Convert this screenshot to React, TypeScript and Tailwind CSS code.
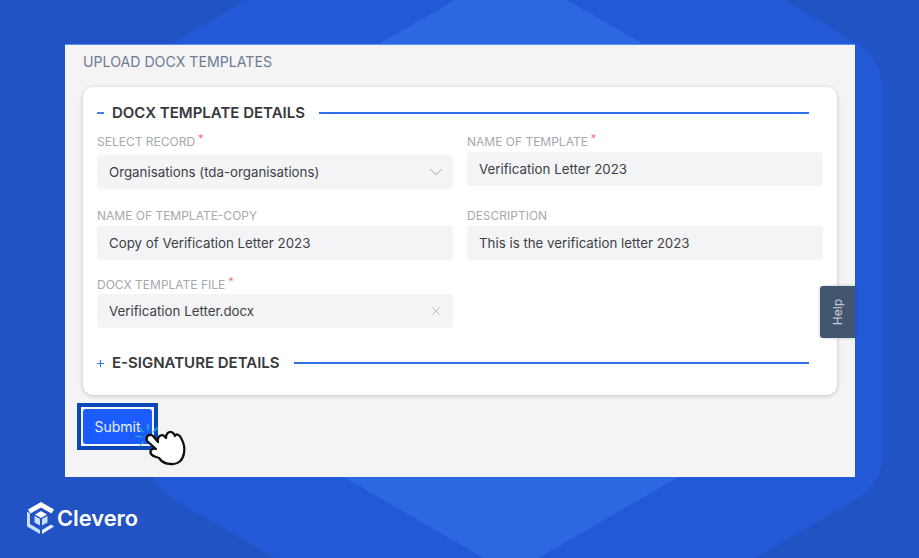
import { ChevronDown, Plus, X } from 'lucide-react'
import type { ReactNode } from 'react'

const font = { fontFamily: 'Inter, "Liberation Sans", sans-serif' }
const inputBox = 'flex h-[34px] w-full items-center justify-between rounded-[4px] bg-[#f3f4f6] pl-[12px] pr-[11px] pt-[2px] text-[13.3px] text-[#3f4045]'
const labelText = 'flex h-[16px] items-center text-[12px] leading-[16px] text-[#a5a8b0]'

function Label({ text, required }: { text: string; required?: boolean }) {
  return (
    <div className={labelText}>
      <span>{text}</span>
      {required && <span className="mb-[9px] ml-[3px] text-[11px] leading-[8px] text-[#f4736b]">*</span>}
    </div>
  )
}

function Field({ children, className }: { children: ReactNode; className?: string }) {
  return <div className={`${inputBox} ${className ?? ''}`}>{children}</div>
}

function SectionHeading({ title, open }: { title: string; open?: boolean }) {
  return (
    <div className="flex h-[20px] items-center">
      <div className="flex w-[15px] shrink-0 items-center text-[#2f74f0]">
        {open ? <div className="h-[2px] w-[7px] bg-[#3f80f2]" /> : <Plus size={11} strokeWidth={2.2} className="-ml-[2px]" />}
      </div>
      <span className="pt-px text-[15px] font-semibold whitespace-nowrap text-[#37383c]">{title}</span>
      <div className="mr-[14px] ml-[14px] h-[2px] flex-1 bg-[#2f6fe8]" />
    </div>
  )
}

function Background() {
  return (
    <svg className="absolute inset-0" width="919" height="558" viewBox="0 0 919 558">
      <path
        d="M515 -160 L853 41 Q882 58 882 90 L882 455 Q882 484 855 500 L515 697 L175 500 Q148 484 148 455 L148 90 Q148 58 177 41 Z"
        fill="#2259d7"
      />
      <path d="M511 -32 L811 140 L811 400 L511 574 L211 400 L211 140 Z" fill="#2c69e1" />
    </svg>
  )
}

function Hand() {
  return (
    <svg className="absolute top-[418px] left-[131px]" width="58" height="52" viewBox="132 418 58 52" fill="none">
      <g stroke="#2fc4a6" strokeWidth="1.2" strokeLinecap="round">
        <path d="M141 428 L144 432" />
        <path d="M149 424 L149 430" />
        <path d="M158 428 L154 432" />
        <path d="M137 436 L143 437" />
        <path d="M141 446 L144 442" />
      </g>
      <path
        d="M148 441 C146 436 151 433 154 436 L159 442 C158 436 163 433 166 437 L167 438 C167 432 172 430 175 434 L176 436 C177 433 181 435 182 438 C185 443 186 448 185 453 C184 460 179 465 172 464 C166 464 162 461 160 458 C158 457 154 457 152 454 C150 450 154 448 157 449 Z"
        fill="#fff"
        stroke="#111"
        strokeWidth="2.3"
        strokeLinejoin="round"
      />
    </svg>
  )
}

function Logo() {
  return (
    <div className="mt-[25px] ml-[27px] flex items-center gap-[3px]">
      <svg width="28" height="32" viewBox="0 0 28 32">
        <path d="M14 0 L27 7.5 L24.5 11.5 L14 5.5 L3.5 11.5 L1 7.5 Z" fill="#fff" />
        <path d="M0 9.5 L3 11.5 L3 22 L13 28 L13 32 L0 24.5 Z" fill="#c5e0ff" />
        <path d="M15 28 L24 22.5 L27 24.5 L15 32 Z" fill="#e6f2ff" />
        <path d="M14 9 L20 12.5 L14 16 L8 12.5 Z" fill="#fff" />
        <path d="M7.5 14 L13 17 L13 23.5 L7.5 20.5 Z" fill="#c5e0ff" />
        <path d="M20.5 14 L15 17 L15 23.5 L20.5 20.5 Z" fill="#c5e0ff" />
      </svg>
      <span className="-ml-px text-[21.8px] leading-[32px] font-semibold text-white">Clevero</span>
    </div>
  )
}

export default function App() {
  return (
    <div className="relative h-[558px] w-[919px] overflow-hidden bg-[#2253c5]" style={font}>
      <Background />
      <div className="relative flex h-full flex-col pt-[44px]">
        <div className="relative ml-[65px] h-[433px] w-[790px] border-t border-[#5b8eee] bg-[#f4f4f4] px-[18px] pt-[7px]">
          <h1 className="text-[14.15px] leading-[20px] text-[#6d7c93]">UPLOAD DOCX TEMPLATES</h1>

          <div className="mt-[15px] rounded-[10px] bg-white px-[14px] pt-[16px] pb-[22px] shadow-[0_1px_4px_rgba(0,0,0,0.2)]">
            <SectionHeading title="DOCX TEMPLATE DETAILS" open />

            <div className="mt-[11px] grid grid-cols-2 gap-x-[14px]">
              <div className="flex flex-col">
                <Label text="SELECT RECORD" required />
                <Field className="mt-[5px]">
                  <span>Organisations (tda-organisations)</span>
                  <ChevronDown size={22} strokeWidth={1.1} className="-mr-[5px] -mt-[2px] text-[#b4b8c0]" />
                </Field>
                <div className="mt-[19px]">
                  <Label text="NAME OF TEMPLATE-COPY" />
                </div>
                <Field className="mt-[2px]">Copy of Verification Letter 2023</Field>
                <div className="mt-[17px]">
                  <Label text="DOCX TEMPLATE FILE" required />
                </div>
                <Field className="mt-[1px]">
                  <span>Verification Letter.docx</span>
                  <X size={14} strokeWidth={1.2} className="-mr-px -mt-[2px] text-[#a9adb5]" />
                </Field>
              </div>
              <div className="flex flex-col">
                <Label text="NAME OF TEMPLATE" required />
                <Field className="mt-[2px]">Verification Letter 2023</Field>
                <div className="mt-[22px]">
                  <Label text="DESCRIPTION" />
                </div>
                <Field className="mt-[2px]">This is the verification letter 2023</Field>
              </div>
            </div>

            <div className="mt-[25px]">
              <SectionHeading title="E-SIGNATURE DETAILS" />
            </div>
          </div>

          <div className="mt-[8px] -ml-[6px] w-fit border-[4px] border-[#0b47b9] bg-[#f4f4f4] p-[2px]">
            <button className="flex h-[35px] w-[69px] items-center justify-center rounded-[3px] bg-[#1a5cff] text-[14px] text-[#e8efff]">
              Submit
            </button>
          </div>

          <div className="absolute top-[241px] right-0 flex h-[52px] w-[35px] items-center justify-center rounded-l-[3px] bg-[#43566f] shadow-[0_0_3px_rgba(0,0,0,0.25)]">
            <span className="rotate-180 text-[12px] text-[#c9d0da] [writing-mode:vertical-rl]">Help</span>
          </div>
        </div>
        <Logo />
      </div>
      <Hand />
    </div>
  )
}
